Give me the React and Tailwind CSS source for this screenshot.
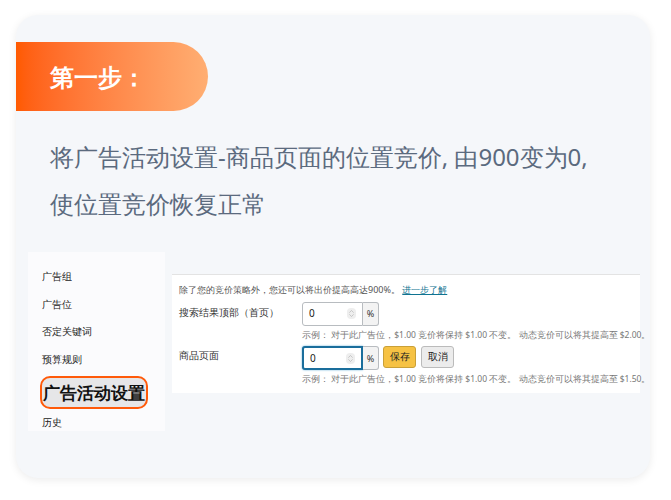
import { ChevronsUpDown } from "lucide-react";

const menu = ["广告组", "广告位", "否定关键词", "预算规则"];

function NumInput({ focused }) {
  return (
    <div className="flex h-[24px]">
      <div
        className={`flex items-center justify-between w-[61px] bg-white rounded-l-[3px] px-[6px] ${
          focused ? "border-2 border-[#1a6e9c] shadow-[0_0_2px_#5aa6d6]" : "border border-[#b8bcc0]"
        }`}
      >
        <span className="text-[10px] text-[#222]">0</span>
        <ChevronsUpDown className="w-[9px] h-[11px] text-[#aaa] bg-[#eee] rounded-sm" strokeWidth={1.5} />
      </div>
      <div className="w-[16px] border border-l-0 border-[#b8bcc0] bg-[#f3f3f3] rounded-r-[3px] flex items-center justify-center text-[9px] text-[#333]">
        %
      </div>
    </div>
  );
}

function Example({ amount }) {
  return (
    <p className="ml-[123px] mt-[3px] text-[8.5px] text-[#777] whitespace-nowrap">
      示例： 对于此广告位，$1.00 竞价将保持 $1.00 不变。 动态竞价可以将其提高至 {amount}。
    </p>
  );
}

export default function App() {
  return (
    <div className="w-[671px] h-[500px] bg-white pt-[15px] pl-[16px] font-['Noto_Sans_CJK_SC','Noto_Sans',sans-serif]">
      <div className="w-[634px] h-[463px] bg-[#f5f7fa] rounded-[22px] shadow-[0_2px_8px_rgba(0,0,0,0.08)] pt-[27px]">
        <div className="w-[192px] h-[69px] rounded-r-full bg-gradient-to-r from-[#ff5a00] to-[#ffae72] flex items-center pl-[34px]">
          <span className="text-white text-[24px] font-bold">第一步：</span>
        </div>
        <div className="pl-[34px] pt-[22px] text-[24px] leading-[47px] text-[#5b6a7e]">
          <p>将广告活动设置-商品页面的位置竞价, 由900变为0,</p>
          <p>使位置竞价恢复正常</p>
        </div>
        <div className="flex mt-[25px] ml-[12px] gap-[7px]">
          <div className="w-[137px] h-[179px] bg-[#fbfbfd] pl-[14px] pt-[17px] text-[10px] text-[#222]">
            {menu.map((m) => (
              <p key={m} className="h-[27.5px]">{m}</p>
            ))}
            <div className="-ml-[2px] -mt-[3px] w-[108px] h-[33px] border-2 border-[#ff5a0a] bg-[#e6e6e8] rounded-[10px] flex items-center justify-center text-[17px] font-bold text-[#111]">
              广告活动设置
            </div>
            <p className="mt-[6px]">历史</p>
          </div>
          <div className="mt-[22px] w-[468px] h-[119px] bg-white border-t border-[#e3e3e3] pl-[7px] pt-[8px] text-[#333]">
            <p className="text-[9px] text-[#555]">
              除了您的竞价策略外，您还可以将出价提高高达900%。 <span className="text-[#0f7391] underline">进一步了解</span>
            </p>
            <div className="flex items-start mt-[5px]">
              <span className="w-[123px] text-[9.5px] pt-[4px]">搜索结果顶部（首页）</span>
              <NumInput />
            </div>
            <Example amount="$2.00" />
            <div className="flex items-start mt-[5px]">
              <span className="w-[123px] text-[9.5px] pt-[3px]">商品页面</span>
              <NumInput focused />
              <button className="ml-[4px] h-[22px] w-[33px] bg-[#f6c244] border border-[#c9a038] rounded-[3px] text-[9.5px] text-[#222]">保存</button>
              <button className="ml-[5px] h-[22px] w-[33px] bg-[#ececec] border border-[#bbb] rounded-[3px] text-[9.5px] text-[#222]">取消</button>
            </div>
            <Example amount="$1.50" />
          </div>
        </div>
      </div>
    </div>
  );
}
